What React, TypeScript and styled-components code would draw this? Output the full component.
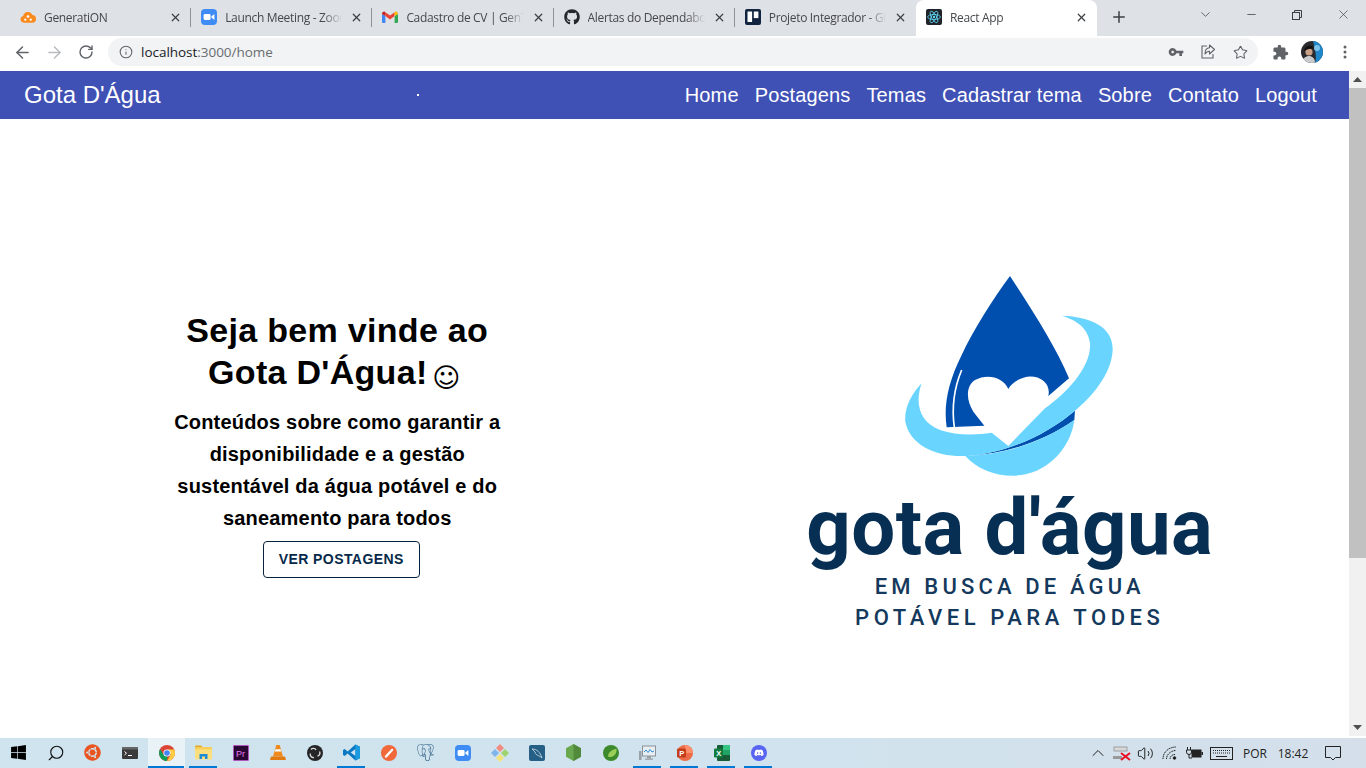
import React from 'react';
import styled, { createGlobalStyle } from 'styled-components';
import { ArrowLeft, ArrowRight, RotateCw, Info, Star, X, Plus, ChevronDown, Minus, ChevronUp, Volume2, Search } from 'lucide-react';
import { MdVpnKey, MdExtension } from 'react-icons/md';
import { FaGithub, FaUbuntu, FaWindows } from 'react-icons/fa';
import { SiPostgresql } from 'react-icons/si';

const Global = createGlobalStyle`
  html, body { margin: 0; padding: 0; height: 768px; overflow: hidden; background: #fff; }
  * { box-sizing: border-box; }
`;
const Shell = styled.div`
  width: 1366px; height: 768px; display: flex; flex-direction: column;
  font-family: "Liberation Sans", Arial, sans-serif; overflow: hidden;
`;
const TabStrip = styled.div`
  height: 36px; flex: none; display: flex; background: #dee1e6; padding: 0 0 0 10px; align-items: stretch;
`;
const Tab = styled.div<{ $active?: boolean; $sep?: boolean }>`
  width: 181.2px; position: relative; display: flex; align-items: center; padding: 0 9px 2px 10px; gap: 8px;
  background: ${p => (p.$active ? '#fff' : 'transparent')};
  border-radius: ${p => (p.$active ? '8px 8px 0 0' : '0')};
  &::after {
    content: ''; position: absolute; right: 0; top: 8px; height: 19px; width: 1px;
    background: ${p => (p.$sep ? '#8f9297' : 'transparent')};
  }
`;
const TabTitle = styled.span`
  flex: 1; min-width: 0; white-space: nowrap; overflow: hidden; font: 12px "Open Sans", sans-serif; letter-spacing: -0.33px; color: #45484c;
  -webkit-mask-image: linear-gradient(90deg, #000 84%, transparent 100%);
  mask-image: linear-gradient(90deg, #000 84%, transparent 100%);
`;
const Fav = styled.span`
  width: 16px; height: 16px; flex: none; display: flex; align-items: center; justify-content: center;
`;
const NewTab = styled.div`
  width: 44px; display: flex; align-items: center; justify-content: center; color: #3c4043; padding-bottom: 2px;
`;
const WinControls = styled.div`
  margin-left: auto; display: flex; color: #3c4043;
`;
const WinBtn = styled.div`
  width: 46px; display: flex; align-items: center; justify-content: center; padding-bottom: 7px;
`;
const Toolbar = styled.div`
  height: 35px; flex: none; background: #fff; display: flex; align-items: center; padding: 0 0 3px 6px;
`;
const ToolBtn = styled.div<{ $dim?: boolean }>`
  width: 32px; height: 28px; display: flex; align-items: center; justify-content: center;
  color: ${p => (p.$dim ? '#b9bbbe' : '#5f6368')};
`;
const Omnibox = styled.div`
  width: 1150px; height: 28px; margin-left: 6px; border-radius: 14px; background: #f1f3f4; display: flex; align-items: center; padding: 0 2px 0 11px; color: #5f6368;
`;
const Url = styled.span`
  font: 13.5px "Open Sans", sans-serif; margin-left: 8px; color: #6a6d70; flex: 1; letter-spacing: -0.03px;
  & b { color: #202124; font-weight: 400; }
`;
const OmniIcon = styled.div`
  width: 32px; display: flex; justify-content: center; color: #5f6368;
`;
const ToolRight = styled.div`
  display: flex; align-items: center; margin-left: 6px; color: #5f6368;
`;
const AvatarSlot = styled.div`
  width: 22px; height: 22px; margin: 0 6px 0 5px; flex: none;
`;
const Viewport = styled.div`
  flex: 1; min-height: 0; display: flex;
`;
const Page = styled.div`
  flex: 1; min-width: 0; display: flex; flex-direction: column;
`;
const Navbar = styled.nav`
  height: 48px; background: #3f51b5; color: #fff; display: flex; align-items: center; padding: 0 32px 0 24px; position: relative;
`;
const Brand = styled.div`
  font-size: 24px;
`;
const Dot = styled.span`
  position: absolute; left: 417px; top: 23px; width: 1.5px; height: 1.5px; background: #fff;
`;
const NavLinks = styled.div`
  margin-left: auto; display: flex; gap: 16px; font-size: 20px; letter-spacing: 0.14px;
`;
const Hero = styled.main`
  flex: 1; display: grid; grid-template-columns: 1fr 1fr; align-items: start;
`;
const Left = styled.div`
  display: flex; flex-direction: column; align-items: center; padding-top: 190px; text-align: center;
`;
const Heading = styled.h1`
  margin: 0; width: 340px; font-size: 34px; line-height: 42px; font-weight: 700; color: #000; letter-spacing: 0.3px;
`;
const Smiley = styled.span`
  font-weight: 400; font-family: "DejaVu Sans", sans-serif; font-size: 27px; line-height: 1px; vertical-align: -3px; margin: 0 6px 0 -5px; letter-spacing: 0;
`;
const Lead = styled.p`
  margin: 13px 0 0; width: 350px; font-size: 20px; line-height: 32px; font-weight: 700; color: #000; letter-spacing: 0.2px;
`;
const CTA = styled.button`
  margin: 7px 0 0 8px; width: 157px; height: 37px; padding: 0 0 2px; background: #fff; border: 1px solid #06243f; border-radius: 4px;
  font: 700 14px "Liberation Sans", sans-serif; letter-spacing: 0.42px; color: #06294a;
`;
const Right = styled.div`
  display: flex; flex-direction: column; align-items: center; padding-top: 146px; padding-right: 4px;
`;
const LogoMark = styled.svg`
  width: 240px; height: 220px; display: block;
`;
const LogoName = styled.div`
  font: 700 78px/78px Roboto, sans-serif; color: #072f53; letter-spacing: 0.4px; white-space: nowrap; margin-top: 4px; height: 82px;
`;
const LogoSub = styled.div<{ $sp: number }>`
  font: 500 22px/31px Roboto, sans-serif; color: #14395c; letter-spacing: ${p => p.$sp}px; white-space: nowrap;
`;
const ScrollBar = styled.div`
  width: 17px; background: #f1f1f1; display: flex; flex-direction: column; align-items: center; color: #505050;
`;
const ScrollBtn = styled.div`
  height: 17px; width: 100%; display: flex; align-items: center; justify-content: center; font-size: 0;
`;
const Thumb = styled.div`
  width: 100%; height: 470px; background: #c1c1c1;
`;
const ScrollRest = styled.div`
  flex: 1;
`;
const Taskbar = styled.footer`
  height: 30px; flex: none; margin-top: 2px; display: flex; background: linear-gradient(90deg, #cfe4ee, #d0e3ee 55%, #d4dfea);
  position: relative;
`;
const TaskItem = styled.div<{ $on?: boolean; $focus?: boolean }>`
  width: 37px; height: 30px; display: flex; align-items: center; justify-content: center; position: relative; padding-bottom: 1px;
  background: ${p => (p.$focus ? '#e9f2f7' : 'transparent')};
  &::after {
    content: ''; position: absolute; bottom: 0; height: 2px; background: #0078d4;
    left: ${p => (p.$focus ? '0' : '4px')}; right: ${p => (p.$focus ? '1px' : '5px')};
    display: ${p => (p.$on ? 'block' : 'none')};
  }
`;
const Tray = styled.div`
  margin-left: auto; display: flex; align-items: center; padding-right: 12px; color: #1c1c1c;
`;
const TrayItem = styled.div<{ $w: number }>`
  width: ${p => p.$w}px; display: flex; align-items: center; justify-content: center; font: 12px "Open Sans", sans-serif; color: #222;
`;

const Cloud = () => (
  <svg width="17" height="14" viewBox="0 0 17 14"><path fill="#fb8b1e" d="M4 13a3.6 3.6 0 0 1-.6-7.1A5 5 0 0 1 13 5a4 4 0 0 1 0 8z" /><circle cx="8.5" cy="6.5" r="1.4" fill="#fff" /><circle cx="5.6" cy="9.8" r="1.2" fill="#fff" /><circle cx="11.4" cy="9.8" r="1.2" fill="#fff" /></svg>
);
const ZoomIco = ({ s = 16 }: { s?: number }) => (
  <svg width={s} height={s} viewBox="0 0 16 16"><rect width="16" height="16" rx="4" fill="#3f8cf6" /><rect x="2.6" y="5" width="7" height="6" rx="1.4" fill="#fff" /><path fill="#fff" d="M10.4 7.4 13.4 5v6l-3-2.4z" /></svg>
);
const Gmail = () => (
  <svg width="16" height="12" viewBox="0 0 16 12"><path fill="#4285f4" d="M0 3v8a1 1 0 0 0 1 1h2.4V5z" /><path fill="#34a853" d="M16 3v8a1 1 0 0 1-1 1h-2.4V5z" /><path fill="#ea4335" d="M3.4 5V1.2L8 4.6l4.6-3.4V5L8 8.4z" /><path fill="#c5221f" d="M0 3c0-2.2 2.2-3.2 3.4-1.8V5z" /><path fill="#fbbc04" d="M16 3c0-2.2-2.2-3.2-3.4-1.8V5z" /></svg>
);
const Trello = () => (
  <svg width="16" height="16" viewBox="0 0 16 16"><rect width="16" height="16" rx="2" fill="#10233f" /><rect x="2.5" y="2.5" width="4.6" height="10.5" fill="#fff" /><rect x="8.8" y="2.5" width="4.6" height="6.6" fill="#fff" /></svg>
);
const ReactIco = () => (
  <svg width="16" height="16" viewBox="0 0 16 16"><rect width="16" height="16" rx="2" fill="#20232a" /><g fill="none" stroke="#61dafb" strokeWidth=".8"><ellipse cx="8" cy="8" rx="6.4" ry="2.5" /><ellipse cx="8" cy="8" rx="6.4" ry="2.5" transform="rotate(60 8 8)" /><ellipse cx="8" cy="8" rx="6.4" ry="2.5" transform="rotate(120 8 8)" /></g><circle cx="8" cy="8" r="1.2" fill="#61dafb" /></svg>
);
const Share = () => (
  <svg width="18" height="18" viewBox="0 0 18 18" fill="none" stroke="#5f6368" strokeWidth="1.1"><path d="M8 3H3v12h11v-4" /><path d="M15.5 6.5 10.5 2v2.8C7.5 5 6 7.5 6 11c1.3-2 2.6-3 4.5-2.8V11z" strokeLinejoin="round" /></svg>
);
const Avatar = () => (
  <svg width="22" height="22" viewBox="0 0 22 22"><defs><clipPath id="av"><circle cx="11" cy="11" r="11" /></clipPath></defs><g clipPath="url(#av)"><rect width="22" height="22" fill="#2a2a2e" /><path d="M12 0h10v22H14c2-6 0-14-2-22z" fill="#1f86c9" /><circle cx="16" cy="7" r="3" fill="#7cc4ec" /><circle cx="8" cy="11" r="3.6" fill="#c99f86" /><path d="M1 22c0-5 4-7 7-7s6 2 6 7z" fill="#c9cacb" /><path d="M3 10c1-6 9-7 10-2-3-1-6 0-10 2z" fill="#111" /></g></svg>
);

const Chrome = () => (
  <svg width="16" height="16" viewBox="0 0 16 16"><circle cx="8" cy="8" r="8" fill="#db4437" /><path fill="#0f9d58" d="M8 16a8 8 0 0 1-6.9-12L5 10.6 8.5 11z" /><path fill="#ffcd40" d="M8 16 11.8 9.5 8 4.5h7.2A8 8 0 0 1 8 16z" /><circle cx="8" cy="8" r="3.6" fill="#fff" /><circle cx="8" cy="8" r="2.8" fill="#4285f4" /></svg>
);
const Folder = () => (
  <svg width="17" height="15" viewBox="0 0 17 15"><path fill="#e4a72c" d="M0 1.5A1 1 0 0 1 1 .5h5l2 2h-8z" /><rect y="2" width="17" height="12" fill="#f6cf5b" rx="1" /><rect y="4.4" width="17" height="10" fill="#fbdf7f" /><path fill="#1d8ad6" d="M4.5 14V9h8v5h-2.5v-2.6H7V14z" /></svg>
);
const Premiere = () => (
  <svg width="16" height="16" viewBox="0 0 16 16"><rect width="16" height="16" fill="#2a0634" stroke="#e77bf2" strokeWidth="1.4" /><text x="3" y="11.5" fontSize="9" fontFamily="Liberation Sans" fill="#e77bf2">Pr</text></svg>
);
const Vlc = () => (
  <svg width="16" height="17" viewBox="0 0 16 17"><path fill="#f08a1d" d="M6.3 1h3.4l3.3 11.5H3z" /><path fill="#fff" d="M5.5 5.2h5l.7 2.4H4.8z" /><path fill="#e27a12" d="M1 12.5h14L16 16H0z" /></svg>
);
const Terminal = () => (
  <svg width="16" height="12" viewBox="0 0 16 12"><rect width="16" height="12" rx="1" fill="#3a3a3a" /><rect width="16" height="2.5" fill="#666" /><path d="m2.5 4.5 2 1.7-2 1.7" stroke="#fff" fill="none" /><path d="M6 8.5h4" stroke="#fff" /></svg>
);
const Obs = () => (
  <svg width="16" height="16" viewBox="0 0 16 16"><circle cx="8" cy="8" r="8" fill="#252528" /><g fill="none" stroke="#d8d8d8" strokeWidth="1.4"><path d="M4 4.5a3 3 0 0 1 5 .5" /><path d="M12.5 6.5a3 3 0 0 1-2 4.5" /><path d="M7 12.5a3 3 0 0 1-3.5-4" /></g></svg>
);
const VsCode = () => (
  <svg width="17" height="17" viewBox="0 0 17 17"><path fill="#0a78c2" d="M12.4.6 17 2.8v11.4l-4.6 2.2L4.6 9.6 1.7 12 0 11V6l1.7-1 2.9 2.4z" /><path fill="#d0e3ee" d="M12.5 5 7.7 8.5l4.8 3.5z" /><path fill="#1a9be0" d="M12.4.6 17 2.8v11.4l-4.6 2.2z" /></svg>
);
const Postman = () => (
  <svg width="16" height="16" viewBox="0 0 16 16"><circle cx="8" cy="8" r="8" fill="#f1683a" /><path d="M5 11.5 11 5" stroke="#fff" strokeWidth="2.4" strokeLinecap="round" /></svg>
);
const Kraken = () => (
  <svg width="18" height="18" viewBox="0 0 18 18"><path fill="#f28b82" d="M9 0l4 4-4 4-4-4z" /><path fill="#7fb4ec" d="M4 5l4 4-4 4-4-4z" /><path fill="#9fd36e" d="M14 5l4 4-4 4-4-4z" /><path fill="#f4e27a" d="M9 10l4 4-4 4-4-4z" /></svg>
);
const Mysql = () => (
  <svg width="16" height="16" viewBox="0 0 16 16"><rect width="16" height="16" rx="2" fill="#265f85" /><path d="M3 4c5 0 8 3 10 9-3-3-6-2-7-6-1-1-2-2-3-3z" fill="none" stroke="#cfe2ee" strokeWidth=".8" /></svg>
);
const NodeHex = () => (
  <svg width="15" height="17" viewBox="0 0 15 17"><path fill="#6aa84f" d="M7.5 0 15 4.25v8.5L7.5 17 0 12.75v-8.5z" /><path fill="#528a3c" d="M7.5 0 15 4.25v8.5L7.5 17z" /></svg>
);
const Spring = () => (
  <svg width="16" height="16" viewBox="0 0 16 16"><circle cx="8" cy="8" r="8" fill="#3c8a2c" /><path d="M13.5 3.5c.5 6-3 9-8 8.5-1-2 0-6 8-8.5z" fill="#9ccf5a" /></svg>
);
const Perf = () => (
  <svg width="17" height="16" viewBox="0 0 17 16"><rect x="3.5" y="1" width="13" height="10" fill="#e8eef2" stroke="#8a9298" /><path d="m5 7 2-2 2 2.500 2-3 2 2.500 2-1" stroke="#2b8fd6" fill="none" /><rect x="8" y="11" width="4" height="2.5" fill="#9aa0a5" /><rect x="6" y="13.5" width="8" height="1.3" fill="#9aa0a5" /><rect y="6" width="2.5" height="9" fill="#9aa0a5" /></svg>
);
const Ppt = () => (
  <svg width="16" height="16" viewBox="0 0 16 16"><circle cx="8" cy="8" r="8" fill="#ed6c47" /><path d="M8 0a8 8 0 0 1 8 8H8z" fill="#ff8f6b" /><rect y="3.5" width="9" height="9" rx="1" fill="#c43e1c" /><text x="2.3" y="10.8" fontSize="7.5" fontWeight="700" fontFamily="Liberation Sans" fill="#fff">P</text></svg>
);
const Excel = () => (
  <svg width="16" height="16" viewBox="0 0 16 16"><rect x="3" width="13" height="16" rx="1" fill="#185c37" /><rect x="9" width="7" height="5" fill="#33c481" /><rect x="9" y="5" width="7" height="5" fill="#21a366" /><rect y="3.5" width="9" height="9" rx="1" fill="#107c41" /><text x="2.2" y="10.8" fontSize="7.5" fontWeight="700" fontFamily="Liberation Sans" fill="#fff">X</text></svg>
);
const DiscordIco = () => (
  <svg width="16" height="16" viewBox="0 0 16 16"><circle cx="8" cy="8" r="8" fill="#5865f2" /><g transform="translate(3.2 3.2) scale(.4)"><path fill="#fff" d="M20 4.5A19 19 0 0 0 15.6 3l-.6 1.2a17 17 0 0 0-6 0L8.4 3A19 19 0 0 0 4 4.500C1.200 8.700.4 12.800.8 16.800A19 19 0 0 0 6.200 19.500l1.100-1.800-1.700-.8.4-.3c3.600 1.700 7.500 1.700 12 0l.4.3-1.700.8 1.100 1.800a19 19 0 0 0 5.400-2.700C23.700 12.200 22.500 8.100 20 4.500zM8.500 14.300c-1 0-1.900-1-1.900-2.100s.8-2.100 1.900-2.100 1.900 1 1.900 2.100-.8 2.100-1.900 2.100zm7 0c-1 0-1.900-1-1.900-2.100s.8-2.100 1.900-2.100 1.900 1 1.900 2.100-.8 2.100-1.900 2.100z" /></g></svg>
);
const NetX = () => (
  <svg width="18" height="16" viewBox="0 0 18 16"><rect x="1" y="2" width="13" height="4" fill="#d8d8d8" stroke="#888" strokeWidth=".7" /><rect x="0" y="11" width="9" height="3" fill="#999" /><path d="M8 8l9 7M17 8l-9 7" stroke="#e81123" strokeWidth="2" /></svg>
);
const Wifi = () => (
  <svg width="16" height="16" viewBox="0 0 16 16" fill="none" stroke="#222" strokeWidth="1"><path d="M1 14C1 7 7 2 14 2" strokeDasharray="1.4 .6" /><path d="M4.5 14C4.5 9.5 9 5.5 14 5.5" strokeDasharray="1.4 .6" /><path d="M8 14c0-2.5 2-4.500 5-4.500" strokeDasharray="1.4 .6" /><circle cx="12.5" cy="13" r="1.3" fill="#222" /></svg>
);
const Battery = () => (
  <svg width="17" height="14" viewBox="0 0 17 14"><path d="M1.500 1v3M4.500 1v3M0.500 4h5v2a2.500 2.500 0 0 1-5 0zM3 8v4h3" fill="none" stroke="#222" strokeWidth="1" /><rect x="5.5" y="3.5" width="10" height="8" fill="#222" /><rect x="15.5" y="6" width="1.5" height="3" fill="#222" /></svg>
);
const Keyboard = () => (
  <svg width="23" height="13" viewBox="0 0 23 13" fill="none" stroke="#222"><rect x=".5" y=".5" width="22" height="12" /><path d="M3 3.500h17M3 6h17" strokeDasharray="1 1" /><path d="M6 9.500h11" /></svg>
);
const Notice = () => (
  <svg width="16" height="15" viewBox="0 0 16 15" fill="none" stroke="#222"><path d="M.5.500h15v11h-5L8 14l-2.500-2.500h-5z" /></svg>
);
const Restore = () => (
  <svg width="10" height="10" viewBox="0 0 10 10" fill="none" stroke="#3c4043"><rect x=".5" y="2.5" width="7" height="7" /><path d="M2.500 2.500v-2h7v7h-2" /></svg>
);
const Caret = ({ up }: { up?: boolean }) => (
  <svg width="9" height="5" viewBox="0 0 9 5"><path d={up ? 'M4.500 0 9 5H0z' : 'M0 0h9L4.500 5z'} fill="#505050" /></svg>
);
const Dots = () => (
  <svg width="4" height="14" viewBox="0 0 4 14" fill="#5f6368"><circle cx="2" cy="2" r="1.5" /><circle cx="2" cy="7" r="1.5" /><circle cx="2" cy="12" r="1.5" /></svg>
);

const tabs = [
  { t: 'GeneratiON', i: <Cloud />, sep: true },
  { t: 'Launch Meeting - Zoom', i: <ZoomIco />, sep: true },
  { t: 'Cadastro de CV | GenTalent', i: <Gmail />, sep: true },
  { t: 'Alertas do Dependabot', i: <FaGithub size={16} color="#24292e" />, sep: true },
  { t: 'Projeto Integrador - GitHub', i: <Trello /> },
  { t: 'React App', i: <ReactIco />, active: true },
];
const links = ['Home', 'Postagens', 'Temas', 'Cadastrar tema', 'Sobre', 'Contato', 'Logout'];
const apps: { i: React.ReactNode; on?: boolean; focus?: boolean }[] = [
  { i: <FaWindows size={17} color="#000" /> },
  { i: <Search size={18} color="#111" strokeWidth={1.5} style={{ transform: 'scaleX(-1)' }} /> },
  { i: <FaUbuntu size={17} color="#e95420" /> },
  { i: <Terminal /> },
  { i: <Chrome />, on: true, focus: true },
  { i: <Folder />, on: true },
  { i: <Premiere /> },
  { i: <Vlc /> },
  { i: <Obs /> },
  { i: <VsCode />, on: true },
  { i: <Postman /> },
  { i: <SiPostgresql size={17} color="#2f5d85" /> },
  { i: <ZoomIco /> },
  { i: <Kraken /> },
  { i: <Mysql /> },
  { i: <NodeHex /> },
  { i: <Spring /> },
  { i: <Perf />, on: true },
  { i: <Ppt />, on: true },
  { i: <Excel />, on: true },
  { i: <DiscordIco />, on: true },
];

export default function App() {
  return (
    <Shell>
      <Global />
      <TabStrip>
        {tabs.map(t => (
          <Tab key={t.t} $active={t.active} $sep={t.sep}>
            <Fav>{t.i}</Fav>
            <TabTitle>{t.t}</TabTitle>
            <X size={13} color="#3c4043" strokeWidth={2.2} />
          </Tab>
        ))}
        <NewTab><Plus size={18} strokeWidth={2} /></NewTab>
        <WinControls>
          <WinBtn><ChevronDown size={15} strokeWidth={1.2} /></WinBtn>
          <WinBtn><Minus size={13} strokeWidth={1.4} /></WinBtn>
          <WinBtn><Restore /></WinBtn>
          <WinBtn><X size={15} strokeWidth={1.1} /></WinBtn>
        </WinControls>
      </TabStrip>
      <Toolbar>
        <ToolBtn><ArrowLeft size={19} strokeWidth={1.9} /></ToolBtn>
        <ToolBtn $dim><ArrowRight size={19} strokeWidth={1.9} /></ToolBtn>
        <ToolBtn><RotateCw size={16} strokeWidth={2.1} /></ToolBtn>
        <Omnibox>
          <Info size={14} strokeWidth={1.8} />
          <Url><b>localhost</b>:3000/home</Url>
          <OmniIcon><MdVpnKey size={16} /></OmniIcon>
          <OmniIcon><Share /></OmniIcon>
          <OmniIcon><Star size={15} strokeWidth={1.7} /></OmniIcon>
        </Omnibox>
        <ToolRight>
          <ToolBtn><MdExtension size={17} /></ToolBtn>
          <AvatarSlot><Avatar /></AvatarSlot>
          <ToolBtn><Dots /></ToolBtn>
        </ToolRight>
      </Toolbar>
      <Viewport>
        <Page>
          <Navbar>
            <Brand>Gota D'Água</Brand>
            <Dot />
            <NavLinks>
              {links.map(l => <span key={l}>{l}</span>)}
            </NavLinks>
          </Navbar>
          <Hero>
            <Left>
              <Heading>Seja bem vinde ao Gota D'Água! <Smiley>☺</Smiley></Heading>
              <Lead>Conteúdos sobre como garantir a disponibilidade e a gestão sustentável da água potável e do saneamento para todos</Lead>
              <CTA>VER POSTAGENS</CTA>
            </Left>
            <Right>
              <LogoMark viewBox="0 0 720 660">
                <path fill="#004fae" d="M360 33C430 140 500 250 537 340L475 393 283 482 170 487C160 420 175 350 215 270 250 195 310 100 360 33Z" />
                <path fill="none" stroke="#fff" strokeWidth="5" d="M215 315C190 375 185 430 193 487" />
                <path fill="#fff" d="M355 372C340 335 290 325 255 345 225 365 230 410 250 440L283 482 355 545 465 430 475 393C485 350 440 325 400 338 378 345 362 358 355 372Z" />
                <path fill="#004fae" d="M240 572C370 560 480 500 555 437L553 465C460 530 350 565 240 572Z" />
                <path fill="#69d5ff" d="M225 572C340 572 460 530 553 465 540 560 460 632 370 632 310 632 260 610 225 572Z" />
                <path fill="#69d5ff" d="M515 152C610 155 670 190 668 255 665 330 600 400 555 437 480 500 370 560 240 572 150 580 60 545 46 470 42 430 65 385 95 355 75 410 85 470 150 495 200 512 260 510 305 503L355 543 465 430C530 385 605 305 600 235 595 190 560 165 515 152Z" />
              </LogoMark>
              <LogoName>gota d'água</LogoName>
              <LogoSub $sp={4.15}>EM BUSCA DE ÁGUA</LogoSub>
              <LogoSub $sp={4.55}>POTÁVEL PARA TODES</LogoSub>
            </Right>
          </Hero>
        </Page>
        <ScrollBar>
          <ScrollBtn><Caret up /></ScrollBtn>
          <Thumb />
          <ScrollRest />
          <ScrollBtn><Caret /></ScrollBtn>
        </ScrollBar>
      </Viewport>
      <Taskbar>
        {apps.map((a, i) => (
          <TaskItem key={i} $on={a.on} $focus={a.focus}>{a.i}</TaskItem>
        ))}
        <Tray>
          <TrayItem $w={24}><ChevronUp size={20} strokeWidth={1.2} /></TrayItem>
          <TrayItem $w={24}><NetX /></TrayItem>
          <TrayItem $w={23}><Volume2 size={17} strokeWidth={1.3} color="#111" /></TrayItem>
          <TrayItem $w={26}><Wifi /></TrayItem>
          <TrayItem $w={23}><Battery /></TrayItem>
          <TrayItem $w={30}><Keyboard /></TrayItem>
          <TrayItem $w={38}>POR</TrayItem>
          <TrayItem $w={38}>18:42</TrayItem>
          <TrayItem $w={42}><Notice /></TrayItem>
        </Tray>
      </Taskbar>
    </Shell>
  );
}
